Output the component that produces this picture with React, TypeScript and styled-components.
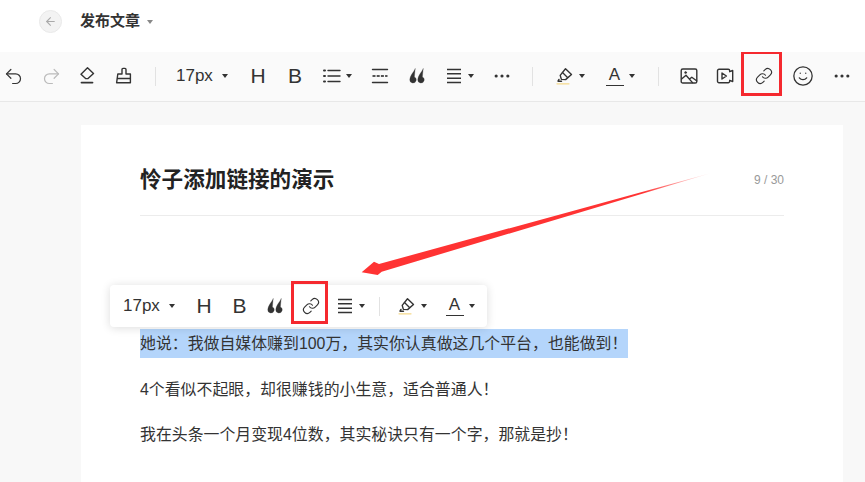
import React from "react";
import styled, { createGlobalStyle } from "styled-components";
import { Undo2, Redo2, Link, Smile, ArrowLeft, Ellipsis } from "lucide-react";

const GlobalStyle = createGlobalStyle`
  html, body {
    margin: 0;
    padding: 0;
    background: #f8f8f8;
  }
  body {
    width: 865px;
    height: 482px;
    overflow: hidden;
    font-family: "Liberation Sans", "Noto Sans CJK SC", sans-serif;
    color: #333;
  }
  * {
    box-sizing: border-box;
  }
`;

const Glyph = styled.svg.attrs({ viewBox: "0 0 18 18", width: 18, height: 18 })`
  flex: none;
  fill: none;
  stroke: #333;
  stroke-width: 1.4;
  stroke-linecap: round;
  stroke-linejoin: round;
`;

function Eraser() {
  return (
    <Glyph>
      <path d="M9.5 0.8 15.5 6.4 10 11.6H7.6L3 7.2z" />
      <path d="M3.5 15.6h11" strokeWidth="1.8" />
    </Glyph>
  );
}

function Brush() {
  return (
    <Glyph>
      <path d="M7 7V2.4a1 1 0 0 1 1-1h2a1 1 0 0 1 1 1V7h4.4v8.8H1.6l1.2-8.8z" />
      <path d="M2.6 11.5h12.6" />
    </Glyph>
  );
}

function ListIcon() {
  return (
    <Glyph>
      <path d="M1 3.5h1M1 9h1M1 14.5h1" strokeWidth="2" />
      <path d="M5 3.5h12M5 9h12M5 14.5h12" />
    </Glyph>
  );
}

function Divider() {
  return (
    <Glyph>
      <path d="M1.5 2.5h15M1.5 15.5h15" />
      <path d="M1.5 9h15" stroke="#555" strokeWidth="1.8" strokeDasharray="3 1.2" strokeLinecap="butt" />
    </Glyph>
  );
}

function Quote() {
  return (
    <Glyph>
      <path
        d="M7.2 1.8C6 4.8 1.8 8.6 1.8 12.8a3.2 3.2 0 1 0 4.6-2.9c.1-2.5.5-5.4.8-8.1zM15.2 1.8c-1.2 3-5.4 6.8-5.4 11a3.2 3.2 0 1 0 4.6-2.9c.1-2.5.5-5.4.8-8.1z"
        fill="#333"
        strokeWidth="0.3"
      />
    </Glyph>
  );
}

function AlignIcon() {
  return (
    <Glyph>
      <path d="M2 2.5h14M2 6.8h14M2 11.2h14M2 15.5h14" strokeLinecap="butt" />
    </Glyph>
  );
}

function Highlighter() {
  return (
    <Glyph>
      <path d="M9.5 1.8 15.5 7.5 9.6 12.6 5.4 12.4 4.2 8.4z" />
      <path d="M6.5 5.5 11.5 10.4" />
      <path d="M3 12.4 2 14.2h3.5" />
      <path d="M1 16.8h12" stroke="#f5d98b" strokeWidth="1.3" />
    </Glyph>
  );
}

function ImageIcon() {
  return (
    <Glyph>
      <rect x="1.2" y="2" width="15.6" height="14" rx="1.6" />
      <path d="M1.6 12 6 8.2l6.5 7.4M9.8 11.8l2-1.6 4.8 3.6" />
      <circle cx="5.6" cy="5.6" r="1" fill="#333" strokeWidth="0.6" />
    </Glyph>
  );
}

function VideoIcon() {
  return (
    <Glyph>
      <path d="M3 2.2h9.2a1.5 1.5 0 0 1 1.5 1.5v1l3-1.2v11l-3-1.2v1a1.5 1.5 0 0 1-1.5 1.5H3A1.5 1.5 0 0 1 1.5 14.3V3.7A1.5 1.5 0 0 1 3 2.2z" />
      <path d="M6 6 10.4 9 6 12z" />
    </Glyph>
  );
}

export default function App() {
  return (
    <>
      <GlobalStyle />
      <Header>
        <BackButton>
          <ArrowLeft size={13} color="#aaa" strokeWidth={2} />
        </BackButton>
        <PageTitle>发布文章</PageTitle>
        <Caret $muted />
      </Header>

      <Toolbar>
        <ToolRow>
          <Tool $w={36}>
            <Undo2 size={21} color="#333" strokeWidth={1.4} />
          </Tool>
          <Tool $w={40}>
            <Redo2 size={21} color="#bbb" strokeWidth={1.4} />
          </Tool>
          <Tool $w={32}>
            <Eraser />
          </Tool>
          <Tool $w={42}>
            <Brush />
          </Tool>
          <Tool $w={20}>
            <Separator />
          </Tool>
          <FontSelect $w={75} $inset={11}>
            17px
            <Caret />
          </FontSelect>
          <Tool $w={36}>
            <Letter>H</Letter>
          </Tool>
          <Tool $w={38}>
            <Letter>B</Letter>
          </Tool>
          <Tool $w={47}>
            <ListIcon />
            <Caret />
          </Tool>
          <Tool $w={38}>
            <Divider />
          </Tool>
          <Tool $w={36}>
            <Quote />
          </Tool>
          <Tool $w={48}>
            <AlignIcon />
            <Caret />
          </Tool>
          <Tool $w={38}>
            <Ellipsis size={20} color="#333" strokeWidth={1.8} />
          </Tool>
          <Tool $w={22}>
            <Separator />
          </Tool>
          <Tool $w={54}>
            <Highlighter />
            <Caret />
          </Tool>
          <Tool $w={46}>
            <UnderlinedLetter>A</UnderlinedLetter>
            <Caret />
          </Tool>
          <Tool $w={30}>
            <Separator />
          </Tool>
          <Tool $w={31}>
            <ImageIcon />
          </Tool>
          <Tool $w={42}>
            <VideoIcon />
          </Tool>
          <Tool $w={36}>
            <Link size={18} color="#333" strokeWidth={1.5} />
            <BarMark />
          </Tool>
          <Tool $w={41}>
            <Smile size={22} color="#333" strokeWidth={1.4} />
          </Tool>
          <Tool $w={38}>
            <Ellipsis size={20} color="#333" strokeWidth={1.8} />
          </Tool>
        </ToolRow>
      </Toolbar>

      <Main>
        <Card>
          <TitleRow>
            <ArticleTitle>怜子添加链接的演示</ArticleTitle>
            <Counter>9 / 30</Counter>
          </TitleRow>
          <Body>
            <FloatingBar>
              <FontSelect $w={76} $inset={13}>
                17px
                <Caret />
              </FontSelect>
              <Tool $w={36}>
                <Letter>H</Letter>
              </Tool>
              <Tool $w={35}>
                <Letter>B</Letter>
              </Tool>
              <Tool $w={36}>
                <Quote />
              </Tool>
              <Tool $w={36}>
                <Link size={18} color="#333" strokeWidth={1.5} />
                <PopupMark />
              </Tool>
              <Tool $w={42}>
                <AlignIcon />
                <Caret />
              </Tool>
              <Tool $w={16}>
                <Separator />
              </Tool>
              <Tool $w={50}>
                <Highlighter />
                <Caret />
              </Tool>
              <Tool $w={46}>
                <UnderlinedLetter>A</UnderlinedLetter>
                <Caret />
              </Tool>
            </FloatingBar>
            <Paragraph>
              <Selected>她说：我做自媒体赚到100万，其实你认真做这几个平台，也能做到！</Selected>
            </Paragraph>
            <Paragraph>4个看似不起眼，却很赚钱的小生意，适合普通人！</Paragraph>
            <Paragraph>我在头条一个月变现4位数，其实秘诀只有一个字，那就是抄！</Paragraph>
          </Body>
        </Card>
      </Main>

      <ArrowOverlay viewBox="0 0 865 482">
        <defs>
          <linearGradient id="arrowFade" x1="713" y1="173" x2="362" y2="272" gradientUnits="userSpaceOnUse">
            <stop offset="0" stopColor="#f33" stopOpacity="0" />
            <stop offset="0.2" stopColor="#f33" stopOpacity="1" />
            <stop offset="1" stopColor="#f33" stopOpacity="1" />
          </linearGradient>
        </defs>
        <path d="M713 172.5 379 264 374 261.7 361.7 272.3 377.7 275 381.7 271.7z" fill="url(#arrowFade)" />
      </ArrowOverlay>
    </>
  );
}

const Header = styled.header`
  height: 52px;
  background: #fff;
  display: flex;
  align-items: center;
  padding: 0 0 9px 39px;
`;

const BackButton = styled.div`
  width: 23px;
  height: 23px;
  border-radius: 50%;
  background: #f3f3f3;
  border: 1px solid #e9e9e9;
  display: flex;
  align-items: center;
  justify-content: center;
`;

const PageTitle = styled.div`
  margin-left: 18px;
  font-size: 15px;
  line-height: 20px;
  margin-top: -2px;
  font-weight: 700;
  color: #333;
`;

const Caret = styled.span<{ $muted?: boolean }>`
  flex: none;
  width: 0;
  height: 0;
  margin-left: ${(p) => (p.$muted ? "7px" : "5px")};
  border-left: 3.5px solid transparent;
  border-right: 3.5px solid transparent;
  border-top: 4px solid ${(p) => (p.$muted ? "#888" : "#333")};
`;

const Toolbar = styled.div`
  height: 50px;
  background: #fafafa;
  border-bottom: 1px solid #e8e8e8;
  overflow: hidden;
`;

const ToolRow = styled.div`
  height: 48px;
  margin-left: -5px;
  display: flex;
  align-items: center;
`;

const Tool = styled.div<{ $w: number }>`
  position: relative;
  flex: none;
  width: ${(p) => p.$w}px;
  height: 20px;
  display: flex;
  align-items: center;
  justify-content: center;
`;

const FontSelect = styled(Tool)<{ $inset: number }>`
  justify-content: flex-start;
  padding-left: ${(p) => p.$inset}px;
  font-size: 17px;
  color: #333;

  ${Caret} {
    margin-left: 9px;
  }
`;

const Letter = styled.span`
  font-family: "Liberation Sans", sans-serif;
  font-size: 21px;
  line-height: 20px;
  color: #333;
`;

const UnderlinedLetter = styled.span`
  display: block;
  flex: none;
  width: 18px;
  height: 19px;
  border-bottom: 1.5px solid #333;
  text-align: center;
  font-size: 17px;
  line-height: 16px;
  color: #333;
`;

const Separator = styled.span`
  width: 1px;
  height: 19px;
  background: #e2e2e2;
`;

const BarMark = styled.span`
  position: absolute;
  left: -5px;
  right: 0;
  top: -15px;
  height: 45px;
  border: 3px solid #f5292f;
`;

const PopupMark = styled.span`
  position: absolute;
  left: -2px;
  right: 1px;
  top: -15px;
  height: 43px;
  border: 3px solid #f5292f;
`;

const Main = styled.main`
  padding: 23px 22px 0 81px;
`;

const Card = styled.div`
  height: 357px;
  background: #fff;
  padding: 0 59px;
`;

const TitleRow = styled.div`
  display: flex;
  align-items: center;
  justify-content: space-between;
  padding: 36px 0 16px;
  border-bottom: 1px solid #ececec;
`;

const ArticleTitle = styled.h1`
  margin: 0;
  font-size: 21.6px;
  line-height: 38px;
  font-weight: 700;
  color: #222;
`;

const Counter = styled.span`
  font-size: 12px;
  color: #999;
`;

const Body = styled.div`
  position: relative;
  padding-top: 113px;
`;

const FloatingBar = styled.div`
  position: absolute;
  left: -30px;
  top: 69px;
  width: 377px;
  height: 42px;
  display: flex;
  align-items: center;
  background: #fff;
  border-radius: 4px;
  box-shadow: 0 1px 10px rgba(0, 0, 0, 0.14);
`;

const Paragraph = styled.p`
  margin: 0 0 16.5px;
  font-size: 15.9px;
  line-height: 29px;
  color: #333;
`;

const Selected = styled.span`
  display: inline-block;
  padding-right: 1px;
  background: #b4d5fb;
`;

const ArrowOverlay = styled.svg`
  position: absolute;
  left: 0;
  top: 0;
  width: 865px;
  height: 482px;
  pointer-events: none;
`;
